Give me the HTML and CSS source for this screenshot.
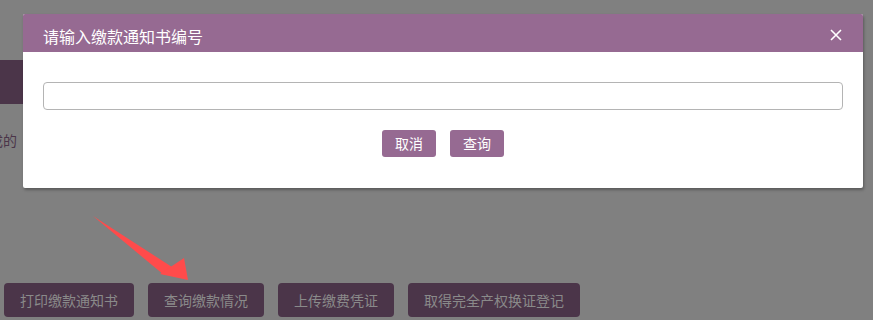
FILE: index.html
```html
<!DOCTYPE html>
<html lang="zh">
<head>
<meta charset="utf-8">
<title>缴款通知书</title>
<link rel="stylesheet" href="styles.css">
</head>
<body>
<div class="page">
  <div class="topbar"></div>
  <p class="note">成的</p>
  <div class="actions">
    <button class="act">打印缴款通知书</button>
    <button class="act">查询缴款情况</button>
    <button class="act">上传缴费凭证</button>
    <button class="act">取得完全产权换证登记</button>
  </div>
</div>

<svg class="arrow" width="120" height="90" viewBox="0 0 120 90">
  <polygon points="1,2 80,53 72,61" fill="#ff4b4b"/>
  <polygon points="96,66 92,44 68,60" fill="#ff4b4b"/>
</svg>

<div class="modal">
  <div class="modal-head">
    <span class="modal-title">请输入缴款通知书编号</span>
    <svg class="close" width="12" height="12" viewBox="0 0 12 12">
      <path d="M1 1 L11 11 M11 1 L1 11" stroke="#fff" stroke-width="1.6"/>
    </svg>
  </div>
  <div class="modal-body">
    <input class="field" type="text">
    <div class="modal-btns">
      <button class="mbtn">取消</button>
      <button class="mbtn">查询</button>
    </div>
  </div>
</div>
</body>
</html>
```
FILE: styles.css
```css
html, body {
  margin: 0;
  padding: 0;
}
body {
  width: 873px;
  height: 320px;
  overflow: hidden;
  background: #808080;
  font-family: "Microsoft YaHei", "Noto Sans CJK SC", "Noto Sans", sans-serif;
  position: relative;
}
.page {
  display: flex;
  flex-direction: column;
  padding-top: 60px;
}
.topbar {
  width: 220px;
  height: 44px;
  background: #4b3549;
}
.note {
  margin: 26px 0 0 -11px;
  font-size: 14px;
  line-height: 20px;
  color: #4b3549;
}
.actions {
  display: flex;
  gap: 14px;
  margin-top: 133px;
  padding-left: 4px;
}
.act {
  height: 34px;
  padding: 0 16px;
  border: none;
  border-radius: 4px;
  background: #4b3549;
  color: #8a8a8a;
  font-family: inherit;
  font-size: 14px;
  line-height: 34px;
}
.arrow {
  position: absolute;
  left: 92px;
  top: 214px;
}
.modal {
  position: absolute;
  left: 23px;
  top: 14px;
  width: 840px;
  height: 174px;
  background: #fff;
  border-radius: 2px;
  box-shadow: 1px 2px 3px rgba(0, 0, 0, 0.3);
  display: flex;
  flex-direction: column;
}
.modal-head {
  height: 38px;
  box-sizing: border-box;
  padding: 12px 21px 6px 20px;
  background: #966a92;
  border-radius: 2px 2px 0 0;
  display: flex;
  align-items: flex-start;
  justify-content: space-between;
}
.modal-title {
  color: #fff;
  font-size: 16px;
  line-height: 20px;
}
.close {
  margin-top: 3px;
}
.modal-body {
  padding: 30px 20px 0 20px;
  display: flex;
  flex-direction: column;
}
.field {
  height: 28px;
  box-sizing: border-box;
  border: 1px solid #b4b4b4;
  border-radius: 4px;
  margin: 0;
}
.modal-btns {
  display: flex;
  justify-content: center;
  gap: 14px;
  margin-top: 20px;
}
.mbtn {
  width: 54px;
  height: 27px;
  padding: 0;
  border: none;
  border-radius: 3px;
  background: #966a92;
  color: #fff;
  font-family: inherit;
  font-size: 14px;
  line-height: 27px;
}
```
